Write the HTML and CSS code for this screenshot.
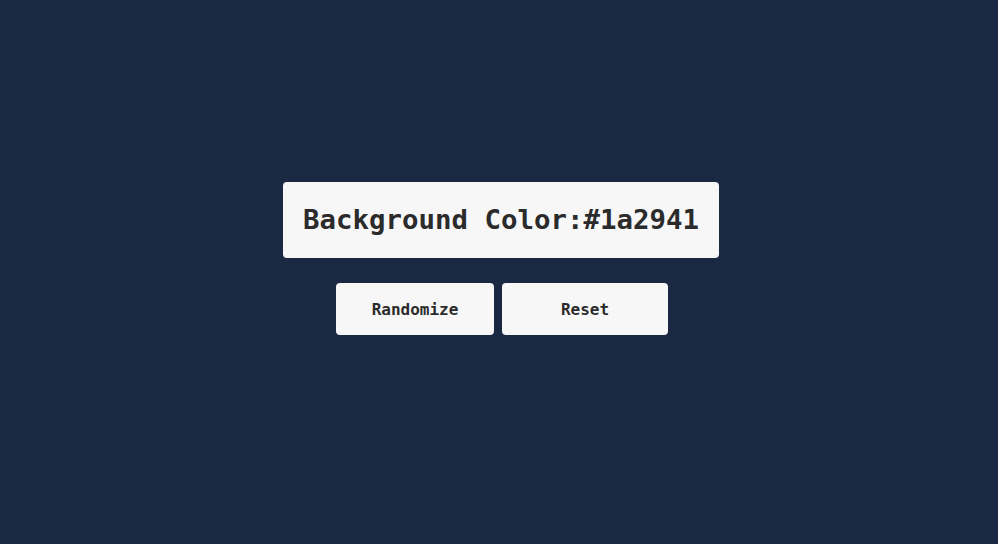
FILE: index.html
```html
<!DOCTYPE html>
<html>
<head>
<meta charset="utf-8">
<link rel="stylesheet" href="styles.css">
</head>
<body>
<main class="app">
  <div class="display">Background Color:#1a2941</div>
  <div class="actions">
    <button class="btn btn-random">Randomize</button>
    <button class="btn btn-reset">Reset</button>
  </div>
</main>
</body>
</html>
```
FILE: styles.css
```css
html, body {
  margin: 0;
  padding: 0;
  height: 100%;
  background: #1a2941;
}
body {
  font-family: "DejaVu Sans Mono", "Liberation Mono", monospace;
}
.app {
  display: flex;
  flex-direction: column;
  align-items: center;
  padding-top: 182px;
  padding-left: 4px;
  gap: 25px;
}
.display {
  box-sizing: border-box;
  width: 436px;
  height: 76px;
  display: flex;
  align-items: center;
  justify-content: center;
  background: #f7f7f7;
  color: #2b2b2b;
  border-radius: 4px;
  font-size: 27.4px;
  font-weight: bold;
  padding-bottom: 1px;
}
.actions {
  display: flex;
  gap: 8px;
  margin-left: 2px;
}
.btn {
  height: 52px;
  border: none;
  border-radius: 4px;
  background: #f7f7f7;
  color: #2b2b2b;
  font-family: "DejaVu Sans Mono", "Liberation Mono", monospace;
  font-weight: bold;
  font-size: 16px;
  padding: 0;
}
.btn-random { width: 158px; }
.btn-reset { width: 166px; }
```
